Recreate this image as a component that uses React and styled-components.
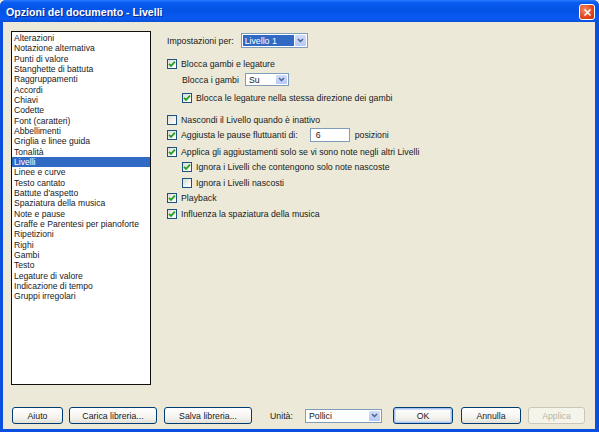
import React from "react";
import styled, { createGlobalStyle, css } from "styled-components";

const categories = [
  "Alterazioni",
  "Notazione alternativa",
  "Punti di valore",
  "Stanghette di battuta",
  "Raggruppamenti",
  "Accordi",
  "Chiavi",
  "Codette",
  "Font (caratteri)",
  "Abbellimenti",
  "Griglia e linee guida",
  "Tonalità",
  "Livelli",
  "Linee e curve",
  "Testo cantato",
  "Battute d'aspetto",
  "Spaziatura della musica",
  "Note e pause",
  "Graffe e Parentesi per pianoforte",
  "Ripetizioni",
  "Righi",
  "Gambi",
  "Testo",
  "Legature di valore",
  "Indicazione di tempo",
  "Gruppi irregolari",
];

const GlobalStyle = createGlobalStyle`
  html, body {
    margin: 0;
    padding: 0;
    background: #ece9d8;
  }
  body {
    font-family: "Liberation Sans", Arial, sans-serif;
    font-size: 8.75px;
    color: #000;
  }
`;

const Window = styled.div`
  width: 599px;
  height: 432px;
  display: flex;
  flex-direction: column;
  background: #0a4fe0;
  border-radius: 6px 6px 0 0;
  overflow: hidden;
`;

const TitleBar = styled.div`
  height: 22px;
  flex: none;
  display: flex;
  align-items: center;
  justify-content: space-between;
  padding: 0 4px 0 6px;
  background: linear-gradient(
    #2a7bff 0%,
    #0a5cf0 12%,
    #0452e6 45%,
    #0a5af2 85%,
    #0a4fd8 100%
  );
`;

const Title = styled.span`
  font-family: "Liberation Sans", Arial, sans-serif;
  font-weight: bold;
  font-size: 10.6px;
  color: #fff;
  text-shadow: 1px 1px 0 #0a2a8a;
  margin-top: 1px;
`;

const CloseButton = styled.div`
  width: 16px;
  height: 16px;
  margin-top: 2px;
  box-sizing: border-box;
  border: 1px solid #fff;
  border-radius: 3px;
  background: radial-gradient(circle at 35% 35%, #f08a6a, #e0451b 60%, #c3330f);
  display: flex;
  align-items: center;
  justify-content: center;
`;

const Body = styled.div`
  flex: 1;
  margin: 0 4px 3px 3px;
  background: #ece9d8;
  display: flex;
  flex-direction: column;
  padding: 9px 0 5px 8px;
`;

const Main = styled.div`
  display: flex;
  height: 354px;
  gap: 16px;
`;

const List = styled.div`
  width: 140px;
  height: 354px;
  box-sizing: border-box;
  border: 1px solid #111;
  background: #fff;
  padding: 1px 0 0 0;
`;

const ListItem = styled.div`
  height: 10.34px;
  line-height: 10.34px;
  padding-left: 2px;
  white-space: nowrap;
  font-size: 8.6px;
  color: #1a1a1a;
  ${({ $selected }) =>
    $selected &&
    css`
      background: #316ac5;
      color: #fff;
    `}
`;

const Settings = styled.div`
  display: flex;
  flex-direction: column;
`;

const Row = styled.div`
  display: flex;
  align-items: center;
  height: ${({ $h }) => $h || 12}px;
  margin-top: ${({ $top }) => $top || 0}px;
  padding-left: ${({ $indent }) => ($indent ? 15 : 0)}px;
  white-space: nowrap;
  color: #1a1a1a;
`;

const Label = styled.span`
  margin-right: ${({ $gap }) => $gap || 0}px;
`;

const Box = styled.span`
  width: 10px;
  height: 10px;
  flex: none;
  box-sizing: border-box;
  border: 1px solid #1c5180;
  background: linear-gradient(135deg, #dcdcd5, #f6f6f3 70%, #fff);
  margin-right: 4px;
  display: flex;
  align-items: center;
  justify-content: center;
`;

const Combo = styled.div`
  width: ${({ $w }) => $w}px;
  height: ${({ $h }) => $h}px;
  box-sizing: border-box;
  border: 1px solid #7f9db9;
  background: #fff;
  display: flex;
  align-items: stretch;
  padding: 1px;
`;

const ComboText = styled.span`
  flex: 1;
  display: flex;
  align-items: center;
  padding-left: 2px;
  color: #1a1a1a;
  ${({ $selected }) =>
    $selected &&
    css`
      background: #316ac5;
      color: #fff;
      margin-right: 1px;
    `}
`;

const ComboButton = styled.span`
  width: 11px;
  flex: none;
  border-radius: 1px;
  background: linear-gradient(#cfdcfd, #b6c9f6);
  display: flex;
  align-items: center;
  justify-content: center;
`;

const TextInput = styled.div`
  width: 40px;
  height: 14px;
  box-sizing: border-box;
  border: 1px solid #7f9db9;
  background: #fff;
  padding-left: 5px;
  display: flex;
  align-items: center;
  margin-right: 5px;
`;

const Footer = styled.div`
  display: flex;
  align-items: center;
  height: 17px;
  margin-top: 22px;
`;

const Button = styled.div`
  width: ${({ $w }) => $w}px;
  height: 17px;
  margin-left: ${({ $left }) => $left || 0}px;
  box-sizing: border-box;
  border: 1px solid #003c74;
  border-radius: 3px;
  background: linear-gradient(#fff, #f5f4ef 60%, #e3e1d7);
  display: flex;
  align-items: center;
  justify-content: center;
  color: #1a1a1a;
  ${({ $default }) =>
    $default &&
    css`
      box-shadow: inset 0 0 0 1px #a8c4f2, inset 0 0 0 2px #cfdcf8;
    `}
  ${({ $disabled }) =>
    $disabled &&
    css`
      border-color: #c9c7ba;
      background: #f5f4ea;
      color: #b7b4a4;
    `}
`;

const FooterLabel = styled.span`
  width: 35px;
  margin-left: 18px;
  color: #1a1a1a;
`;

const Check = () => (
  <svg width="8" height="8" viewBox="0 0 8 8">
    <path d="M1 3.8 L3 5.9 L7 1.6" fill="none" stroke="#21a121" strokeWidth="1.7" />
  </svg>
);

const Chevron = () => (
  <svg width="7" height="5" viewBox="0 0 7 5">
    <path d="M1 1 L3.5 3.5 L6 1" fill="none" stroke="#4d6185" strokeWidth="1.5" />
  </svg>
);

const CheckRow = ({ checked, label, ...rest }) => (
  <Row {...rest}>
    <Box>{checked && <Check />}</Box>
    <Label>{label}</Label>
  </Row>
);

const Select = ({ w, h, value, selected }) => (
  <Combo $w={w} $h={h}>
    <ComboText $selected={selected}>{value}</ComboText>
    <ComboButton>
      <Chevron />
    </ComboButton>
  </Combo>
);

const App = () => {
  return (
    <>
      <GlobalStyle />
      <Window>
        <TitleBar>
          <Title>Opzioni del documento - Livelli</Title>
          <CloseButton>
            <svg width="9" height="9" viewBox="0 0 9 9">
              <path d="M1.5 1.5 L7.5 7.5 M7.5 1.5 L1.5 7.5" stroke="#fff" strokeWidth="1.6" />
            </svg>
          </CloseButton>
        </TitleBar>
        <Body>
          <Main>
            <List>
              {categories.map((c) => (
                <ListItem key={c} $selected={c === "Livelli"}>
                  {c}
                </ListItem>
              ))}
            </List>
            <Settings>
              <Row $h={15} $top={2}>
                <Label $gap={7}>Impostazioni per:</Label>
                <Select w={67} h={15} value="Livello 1" selected />
              </Row>
              <CheckRow $top={10} checked label="Blocca gambi e legature" />
              <Row $indent $h={13} $top={3}>
                <Label $gap={6}>Blocca i gambi</Label>
                <Select w={44} h={13} value="Su" />
              </Row>
              <CheckRow
                $indent
                $top={6}
                checked
                label="Blocca le legature nella stessa direzione dei gambi"
              />
              <CheckRow $top={10} label="Nascondi il Livello quando è inattivo" />
              <Row $h={16} $top={1}>
                <Box>
                  <Check />
                </Box>
                <Label $gap={12}>Aggiusta le pause fluttuanti di:</Label>
                <TextInput>6</TextInput>
                <Label>posizioni</Label>
              </Row>
              <CheckRow
                $top={3}
                checked
                label="Applica gli aggiustamenti solo se vi sono note negli altri Livelli"
              />
              <CheckRow
                $indent
                $top={3}
                checked
                label="Ignora i Livelli che contengono solo note nascoste"
              />
              <CheckRow $indent $top={4} label="Ignora i Livelli nascosti" />
              <CheckRow $top={3} checked label="Playback" />
              <CheckRow $top={4} checked label="Influenza la spaziatura della musica" />
            </Settings>
          </Main>
          <Footer>
            <Button $w={51} $left={1}>Aiuto</Button>
            <Button $w={88} $left={6}>Carica libreria...</Button>
            <Button $w={88} $left={7}>Salva libreria...</Button>
            <FooterLabel>Unità:</FooterLabel>
            <Select w={77} h={14} value="Pollici" />
            <Button $w={60} $left={11} $default>OK</Button>
            <Button $w={60} $left={8}>Annulla</Button>
            <Button $w={57} $left={7} $disabled>Applica</Button>
          </Footer>
        </Body>
      </Window>
    </>
  );
};

export default App;
